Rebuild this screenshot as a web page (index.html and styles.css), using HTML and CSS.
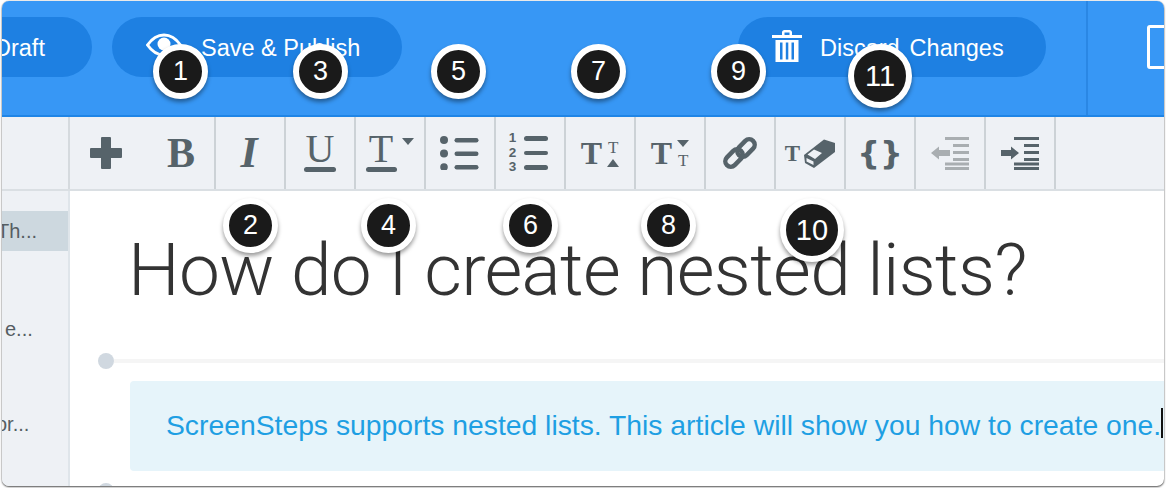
FILE: index.html
```html
<!DOCTYPE html>
<html lang="en">
<head>
<meta charset="utf-8">
<title>How do I create nested lists?</title>
<link rel="stylesheet" href="styles.css">
</head>
<body>
<div class="page">
  <div class="window">
    <header class="topbar">
      <div class="pill pill-draft"><span>Draft</span></div>
      <div class="pill pill-save">
        <svg class="eye" viewBox="0 0 36 24"><path d="M1.500 12C6 5.500 11.500 2 18 2s12 3.500 16.500 10C30 18.500 24.500 22 18 22S6 18.500 1.500 12Z" fill="none" stroke="#fff" stroke-width="3"/><circle cx="18" cy="11" r="6.500" fill="#fff"/></svg>
        <span>Save &amp; Publish</span>
      </div>
      <div class="pill pill-discard">
        <svg class="trash" viewBox="0 0 30 32"><path d="M0 5h30v3H0zM10 5V2.500C10 1 11 0 12.500 0h5C19 0 20 1 20 2.500V5h-2.500V2.500h-5V5z" fill="#fff"/><path d="M3.500 10h23v22h-23zM8 12.500v17h2.500v-17zM13.800 12.500v17h2.500v-17zM19.500 12.500v17H22v-17z" fill="#fff" fill-rule="evenodd"/></svg>
        <span>Discard Changes</span>
      </div>
      <div class="top-divider"></div>
      <div class="top-square"></div>
    </header>

    <nav class="toolbar">
      <div class="corner"></div>
      <div class="cell cell-first">
        <svg class="plus" viewBox="0 0 32 32"><path d="M11 1a1 1 0 0 1 1-1h8a1 1 0 0 1 1 1v10h10a1 1 0 0 1 1 1v8a1 1 0 0 1-1 1H21v10a1 1 0 0 1-1 1h-8a1 1 0 0 1-1-1V21H1a1 1 0 0 1-1-1v-8a1 1 0 0 1 1-1h10z" fill="#56636a"/></svg>
        <span class="glyph glyph-b">B</span>
      </div>
      <div class="cell"><span class="glyph glyph-i">I</span></div>
      <div class="cell cell-col"><span class="glyph glyph-u">U</span><i class="rule rule-u"></i></div>
      <div class="cell cell-col">
        <span class="glyph glyph-t">T</span><i class="rule rule-t"></i>
        <i class="tri-down tri-color"></i>
      </div>
      <div class="cell">
        <svg class="ico-list" viewBox="0 0 40 34"><g fill="#56636a"><circle cx="4" cy="4" r="4"/><circle cx="4" cy="17.500" r="4"/><circle cx="4" cy="31" r="3.800"/><rect x="14.500" y="2" width="24" height="4.500" rx="2.200"/><rect x="14.500" y="15.500" width="24" height="4.500" rx="2.200"/><rect x="14.500" y="29" width="24" height="4.500" rx="2.200"/></g></svg>
      </div>
      <div class="cell cell-numbers">
        <div class="digits"><span>1</span><span>2</span><span>3</span></div>
        <div class="bars"><i></i><i></i><i></i></div>
      </div>
      <div class="cell cell-size">
        <span class="glyph glyph-tt">T</span>
        <div class="size-side"><span class="glyph glyph-small">T</span><i class="tri-up"></i></div>
      </div>
      <div class="cell cell-size">
        <span class="glyph glyph-tt">T</span>
        <div class="size-side"><i class="tri-down tri-plain"></i><span class="glyph glyph-small">T</span></div>
      </div>
      <div class="cell">
        <svg class="ico-link" viewBox="0 0 34 32"><g fill="none" stroke="#56636a" stroke-width="4.500"><rect x="13" y="5.500" width="20" height="11" rx="5.500" transform="rotate(-45 23 11)"/><rect x="1" y="15.500" width="20" height="11" rx="5.500" transform="rotate(-45 11 21)"/></g></svg>
      </div>
      <div class="cell cell-clear">
        <span class="glyph glyph-clear">T</span>
        <svg class="ico-eraser" viewBox="0 0 31 29"><path d="M0 16L20 .5 31 4v9L10 29l-9-5z" fill="#56636a"/><path d="M3.500 15.500L10 10.500l8 3.500-7 6zM2.500 19l7 3.500V26l-7-3.500z" fill="#eef1f5"/></svg>
      </div>
      <div class="cell"><span class="glyph glyph-brace">{}</span></div>
      <div class="cell">
        <svg class="ico-indent" viewBox="0 0 38 34"><g fill="#a9aeb1"><path d="M0 17l8-6.500V14h11v6H8v3.500z"/><rect x="14" y="1" width="24" height="3"/><rect x="22" y="8" width="16" height="3"/><rect x="22" y="15" width="16" height="3"/><rect x="22" y="22" width="16" height="3"/><rect x="14" y="26.500" width="24" height="3"/><rect x="14" y="31" width="24" height="3"/></g></svg>
      </div>
      <div class="cell">
        <svg class="ico-indent" viewBox="0 0 38 34"><g fill="#56636a"><path d="M0 14h10v-3.500l8 6.500-8 6.500V20H0z"/><rect x="13" y="1" width="25" height="3"/><rect x="23" y="8" width="15" height="3"/><rect x="23" y="15" width="15" height="3"/><rect x="23" y="22" width="15" height="3"/><rect x="13" y="26.500" width="25" height="3"/><rect x="13" y="31" width="25" height="3"/></g></svg>
      </div>
    </nav>

    <div class="content">
      <aside class="sidebar">
        <div class="side-item side-active"><span class="side-th">Th...</span></div>
        <div class="side-item side-mid"><span class="side-e">e...</span></div>
        <div class="side-item"><span class="side-or">or...</span></div>
      </aside>
      <main class="main">
        <h1 class="title">How do I create nested lists?</h1>
        <div class="step-line"><i class="dot"></i><i class="line"></i></div>
        <div class="callout">ScreenSteps supports nested lists. This article will show you how to create one.<i class="caret"></i></div>
        <i class="dot dot-next"></i>
      </main>
    </div>
  </div>

  <div class="badge b1">1</div>
  <div class="badge b2">2</div>
  <div class="badge b3">3</div>
  <div class="badge b4">4</div>
  <div class="badge b5">5</div>
  <div class="badge b6">6</div>
  <div class="badge b7">7</div>
  <div class="badge b8">8</div>
  <div class="badge b9">9</div>
  <div class="badge badge-lg b10">10</div>
  <div class="badge badge-lg b11">11</div>
</div>
</body>
</html>
```

FILE: styles.css
```css
* { box-sizing: border-box; }
html, body { margin: 0; padding: 0; background: #fff; }
body { font-family: "Liberation Sans", Arial, sans-serif; }
i { display: block; font-style: normal; }

.page { position: relative; width: 1166px; height: 488px; padding: 1px 2px 2px; overflow: hidden; }
.window {
  height: 485px;
  border-radius: 7px;
  overflow: hidden;
  background: #fff;
  box-shadow: 0 1px 2px rgba(0,0,0,.65), 0 0 1px rgba(0,0,0,.5);
}

/* top bar */
.topbar {
  display: flex;
  height: 116px;
  padding-top: 16px;
  background: #3797f5;
  border-bottom: 2px solid #1f85e6;
}
.pill {
  display: flex;
  align-items: center;
  height: 60px;
  border-radius: 30px;
  background: #1e80e2;
  color: #fff;
  font-size: 23.500px;
}
.pill span { margin-top: 2px; white-space: nowrap; }
.pill-draft { width: 120px; margin-left: -30px; padding-left: 22px; flex: none; }
.pill-save { width: 290px; margin-left: 20px; padding-left: 34px; flex: none; }
.pill-save span { margin-left: 19px; }
.eye { width: 36px; height: 24px; margin-top: -4px; }
.pill-discard { width: 308px; margin-left: 336px; padding-left: 34px; flex: none; }
.pill-discard span { margin-left: 18px; word-spacing: 3.400px; }
.trash { width: 30px; height: 32px; margin-top: -2px; }
.top-divider { width: 2px; height: 114px; margin-top: -16px; margin-left: 40px; background: #2a87e4; flex: none; }
.top-square { width: 30px; height: 44px; margin-top: 8px; margin-left: 59px; border: 3px solid #fff; border-radius: 3px; flex: none; }

/* toolbar */
.toolbar {
  display: flex;
  height: 74px;
  background: #eef1f5;
  border-bottom: 2px solid #dadfe3;
}
.corner { width: 68px; flex: none; border-right: 2px solid #d5dade; }
.cell {
  position: relative;
  display: flex;
  align-items: center;
  justify-content: center;
  width: 70px;
  flex: none;
  border-right: 2px solid #ccd2d6;
  color: #56636a;
}
.cell-first { width: 146px; justify-content: flex-start; padding-left: 20px; }
.cell-col { flex-direction: column; }
.glyph { font-family: "Liberation Serif", serif; line-height: 1; display: block; }
.plus { width: 32px; height: 32px; }
.glyph-b { font-size: 42px; font-weight: 700; margin-left: 45px; }
.glyph-i { font-size: 44px; font-weight: 700; font-style: italic; margin-right: 2px; }
.glyph-u { font-size: 40px; height: 30px; line-height: 30px; }
.glyph-t { font-size: 40px; height: 30px; line-height: 30px; margin-right: 18px; }
.rule { height: 5px; border-radius: 3px; background: #56636a; margin-top: 3px; }
.rule-u { width: 32px; }
.rule-t { width: 31px; margin-right: 18px; }
.tri-down { width: 0; height: 0; border-left: 6px solid transparent; border-right: 6px solid transparent; border-top: 7px solid #56636a; }
.tri-color { position: absolute; left: 46px; top: 21px; }
.tri-up { width: 0; height: 0; border-left: 6px solid transparent; border-right: 6px solid transparent; border-bottom: 8px solid #56636a; margin-top: 3px; }
.tri-plain { margin-bottom: 5px; margin-top: 3px; }
.ico-list { width: 40px; height: 34px; }

.cell-numbers { gap: 5px; padding-right: 6px; }
.digits { display: flex; flex-direction: column; font-weight: 700; font-size: 13.500px; line-height: 14.700px; width: 12px; text-align: center; }
.bars { display: flex; flex-direction: column; gap: 10.200px; }
.bars i { width: 24px; height: 4.500px; border-radius: 3px; background: #56636a; }

.cell-size { gap: 5px; }
.glyph-tt { font-size: 32px; font-weight: 700; }
.glyph-small { font-size: 17px; }
.size-side { display: flex; flex-direction: column; align-items: center; }

.ico-link { width: 34px; height: 32px; }
.cell-clear { gap: 4px; }
.glyph-clear { font-size: 23px; font-weight: 700; }
.ico-eraser { width: 31px; height: 29px; }
.glyph-brace { font-family: "DejaVu Sans", sans-serif; font-weight: 700; font-size: 32px; }
.ico-indent { width: 38px; height: 34px; }

/* content */
.content { display: flex; height: 295px; }
.sidebar {
  width: 68px;
  flex: none;
  padding-top: 20px;
  background: #eef1f5;
  border-right: 2px solid #dfe5ea;
  color: #555d62;
  font-size: 20px;
  overflow: hidden;
}
.side-item { line-height: 40px; white-space: nowrap; }
.side-active { height: 40px; margin-bottom: 58px; background: #cdd8df; }
.side-mid { height: 95px; }
.side-item span { display: block; }
.side-th { margin-left: -5px; }
.side-e { margin-left: 3px; }
.side-or { margin-left: -6px; }

.main { flex: 1; min-width: 0; padding-left: 28px; overflow: hidden; position: relative; }
.title {
  margin: 29px 0 0 30px;
  font-family: Roboto, "Liberation Sans", sans-serif;
  font-weight: 300;
  font-size: 73px;
  letter-spacing: -.64px;
  line-height: 100px;
  color: #333;
  white-space: nowrap;
}
.step-line { display: flex; align-items: center; margin-top: 33px; }
.dot { width: 16px; height: 16px; border-radius: 50%; background: #d0d8e0; flex: none; }
.line { flex: 1; height: 4px; background: #f5f5f5; }
.callout {
  position: relative;
  margin: 12px 0 0 32px;
  height: 90px;
  padding-left: 36px;
  border-radius: 4px 0 0 4px;
  background: #e6f4fa;
  color: #1e9fe3;
  font-size: 28.300px;
  line-height: 88px;
  white-space: nowrap;
}
.caret { position: absolute; left: 1031px; top: 27px; width: 2px; height: 30px; background: #111; }
.dot-next { margin-top: 12px; }

/* numbered badges */
.badge {
  position: absolute;
  width: 55px;
  height: 55px;
  border-radius: 50%;
  border: 6px solid #fff;
  background: #1a1a1a;
  color: #fff;
  font-size: 27px;
  line-height: 43px;
  text-align: center;
  box-shadow: 0 3px 4px rgba(0,0,0,.4);
}
.badge-lg { width: 64px; height: 64px; line-height: 52px; font-size: 29px; }
.b1 { left: 153px; top: 44px; }
.b3 { left: 293px; top: 44px; }
.b5 { left: 431px; top: 44px; }
.b7 { left: 571px; top: 44px; }
.b9 { left: 711px; top: 44px; }
.b11 { left: 848px; top: 44px; }
.b2 { left: 223px; top: 198px; }
.b4 { left: 361px; top: 198px; }
.b6 { left: 503px; top: 198px; }
.b8 { left: 641px; top: 198px; }
.b10 { left: 780px; top: 198px; }
```
